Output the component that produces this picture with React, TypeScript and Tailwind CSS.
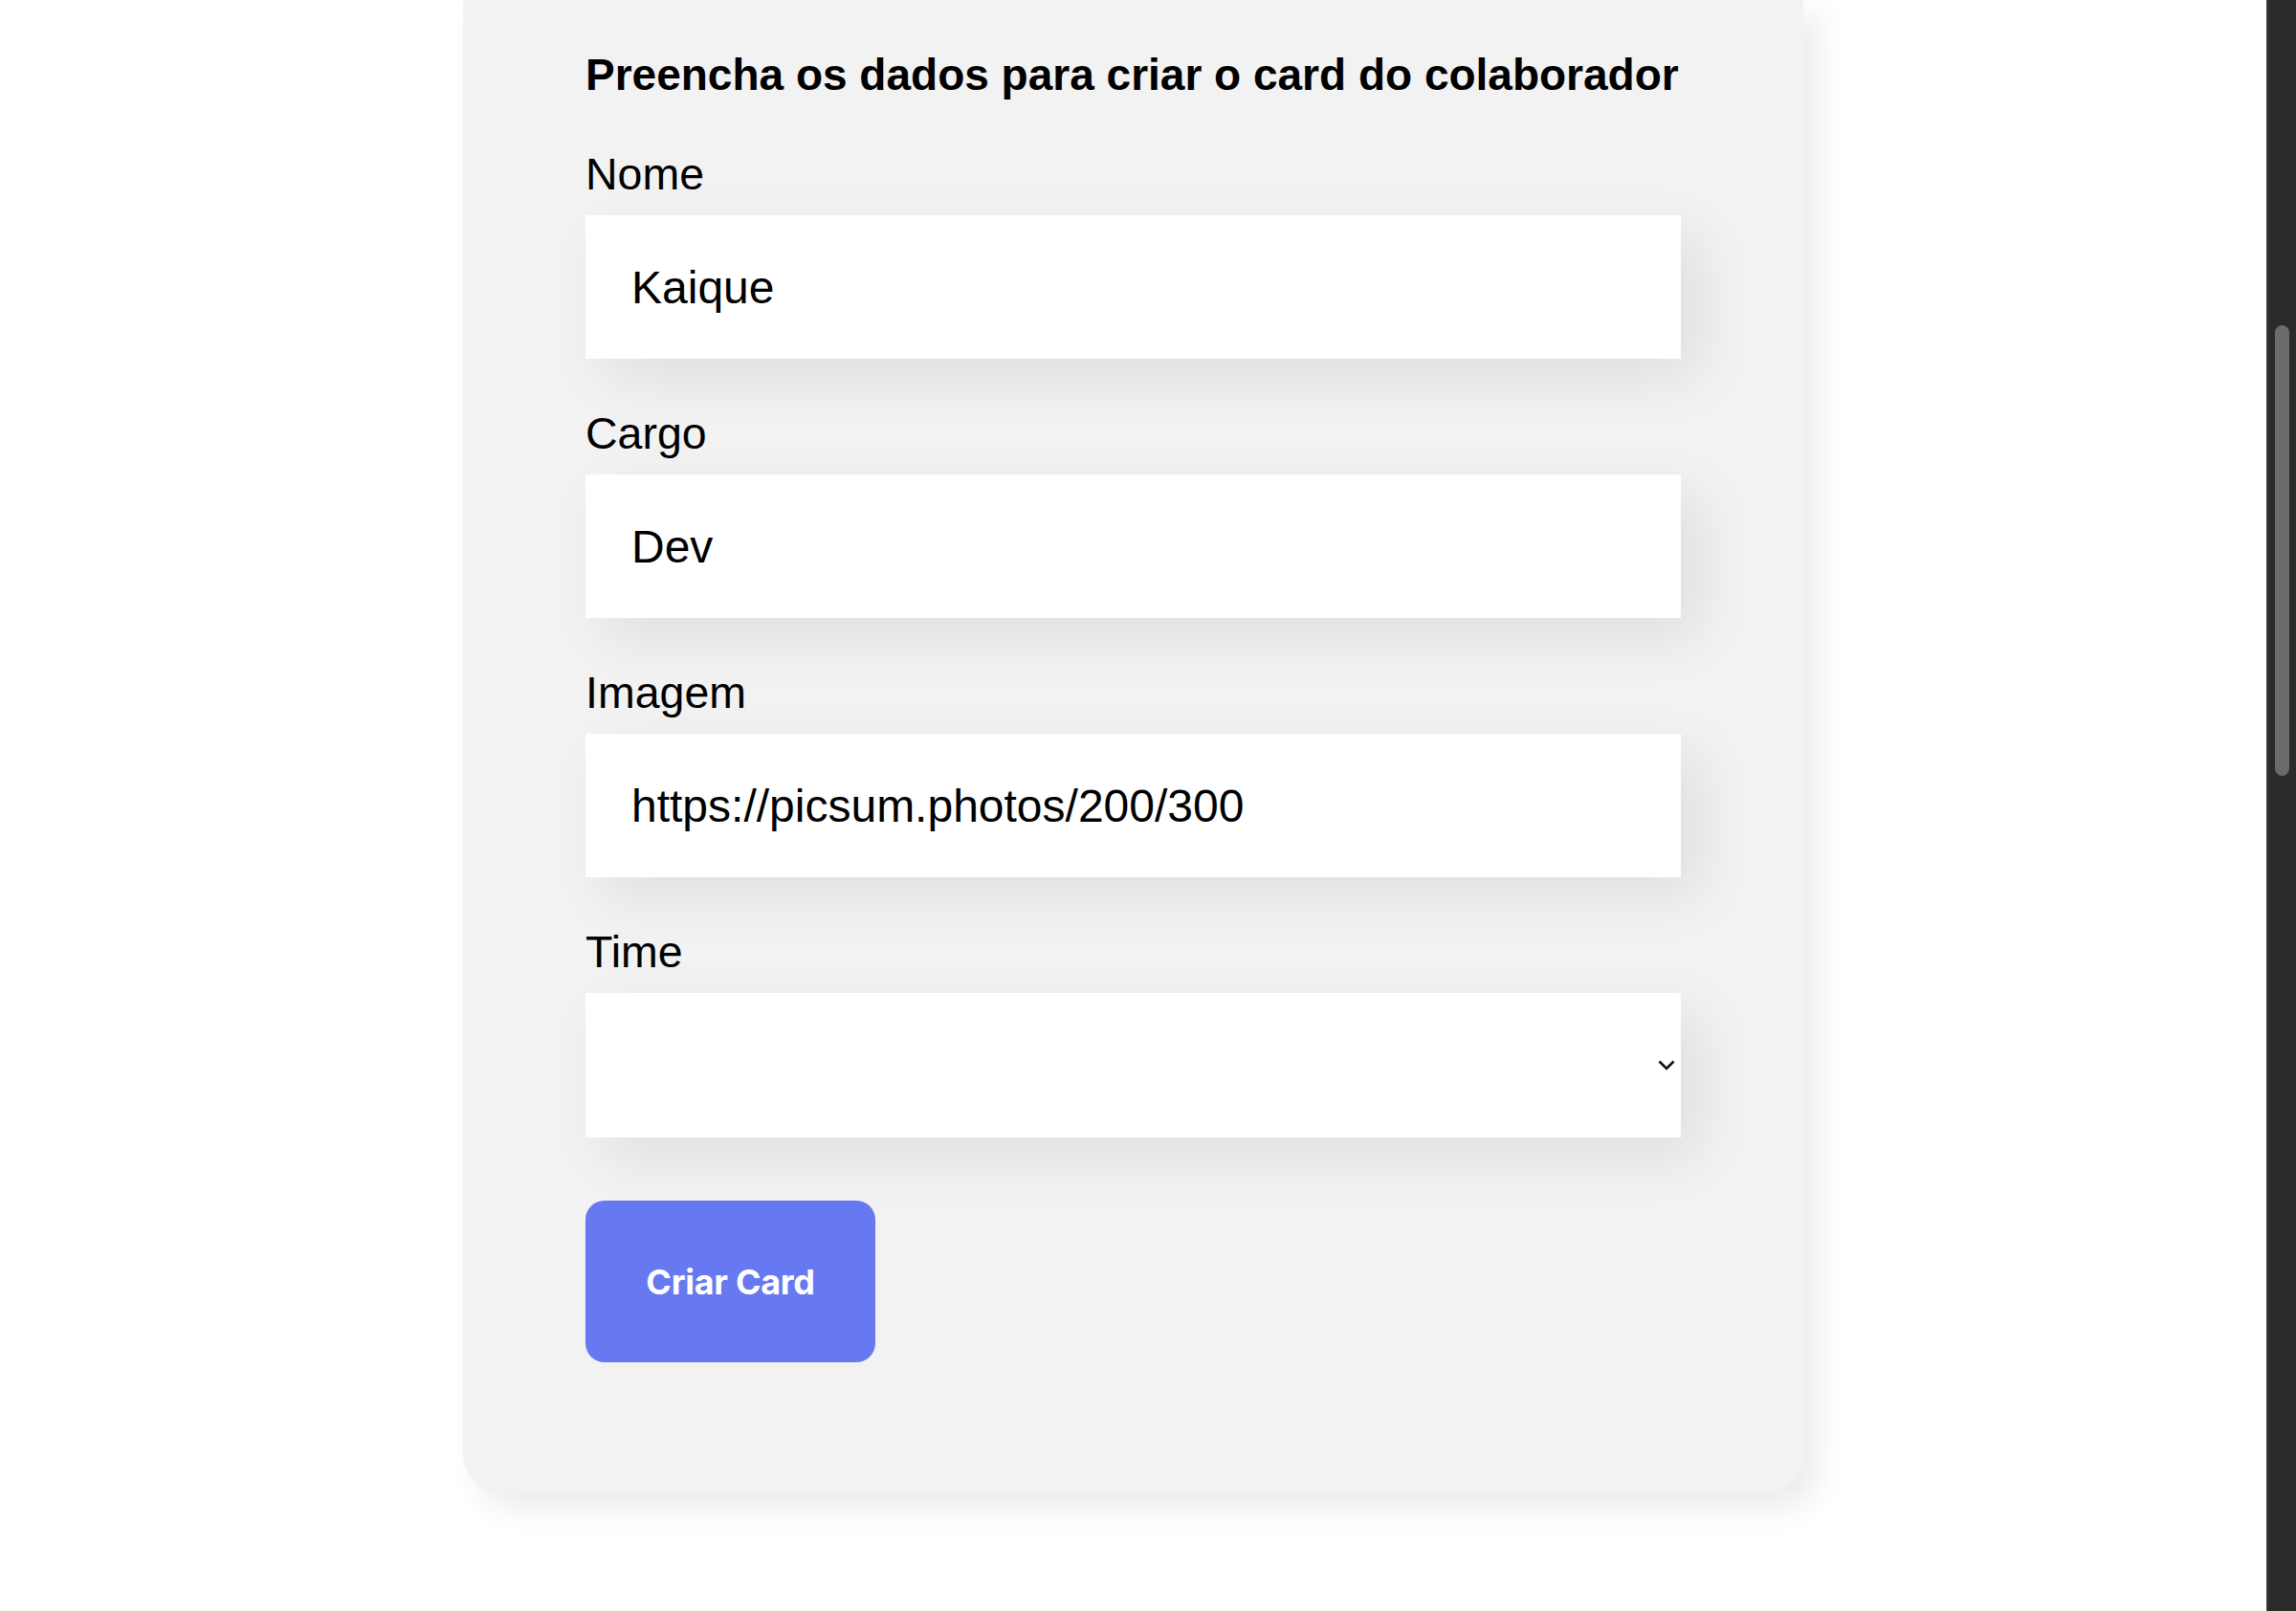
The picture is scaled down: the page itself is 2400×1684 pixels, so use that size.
import React from "react";

const font = { fontFamily: '"Liberation Sans", Arial, Helvetica, sans-serif' };

function Label({ children }: { children: React.ReactNode }) {
  return (
    <label className="block text-[46.5px] leading-[56px] text-black mb-[15px]" style={font}>
      {children}
    </label>
  );
}

function Field({ label, value, first }: { label: string; value: string; first?: boolean }) {
  return (
    <div className={first ? "mt-[48px]" : "mt-[50px]"}>
      <Label>{label}</Label>
      <input
        readOnly
        value={value}
        className="block w-full h-[150px] bg-white border-0 outline-none px-[48px] text-[48px] leading-[55px] text-black shadow-[20px_20px_60px_rgba(0,0,0,0.08)]"
        style={font}
      />
    </div>
  );
}

export default function App() {
  return (
    <div className="flex h-[1684px] w-full overflow-hidden bg-white">
      <div className="flex flex-1 justify-center items-start">
        <form
          className="w-[1401px] bg-[#F2F2F2] rounded-b-[40px] px-[128px] pt-[50px] pb-[137px] shadow-[16px_16px_32px_rgba(0,0,0,0.08)]"
          style={font}
        >
          <h2 className="text-[46px] leading-[56px] font-bold text-black whitespace-nowrap" style={font}>
            Preencha os dados para criar o card do colaborador
          </h2>
          <Field first label="Nome" value="Kaique" />
          <Field label="Cargo" value="Dev" />
          <Field label="Imagem" value="https://picsum.photos/200/300" />
          <div className="mt-[50px]">
            <Label>Time</Label>
            <div className="relative h-[151px] w-full bg-white shadow-[20px_20px_60px_rgba(0,0,0,0.08)]">
              <svg
                className="absolute right-[6px] top-[70px]"
                width="18"
                height="11"
                viewBox="0 0 18 11"
                fill="none"
              >
                <path d="M1.5 1.5 L9 9 L16.5 1.5" stroke="#111" strokeWidth="2.6" />
              </svg>
            </div>
          </div>
          <button
            type="button"
            className="mt-[66px] flex h-[169px] w-[303px] items-center justify-center rounded-[20px] bg-[#6679F0] text-[36px] font-bold tracking-[-0.3px] text-white"
            style={{ fontFamily: 'Inter, "Noto Sans", sans-serif' }}
          >
            Criar Card
          </button>
        </form>
      </div>
      <div className="flex w-[31px] shrink-0 flex-col items-center border-l-2 border-[#3a3a3a] bg-[#2b2b2b] pt-[340px]">
        <div className="h-[471px] w-[15px] rounded-full bg-[#6b6b6b]" />
      </div>
    </div>
  );
}
